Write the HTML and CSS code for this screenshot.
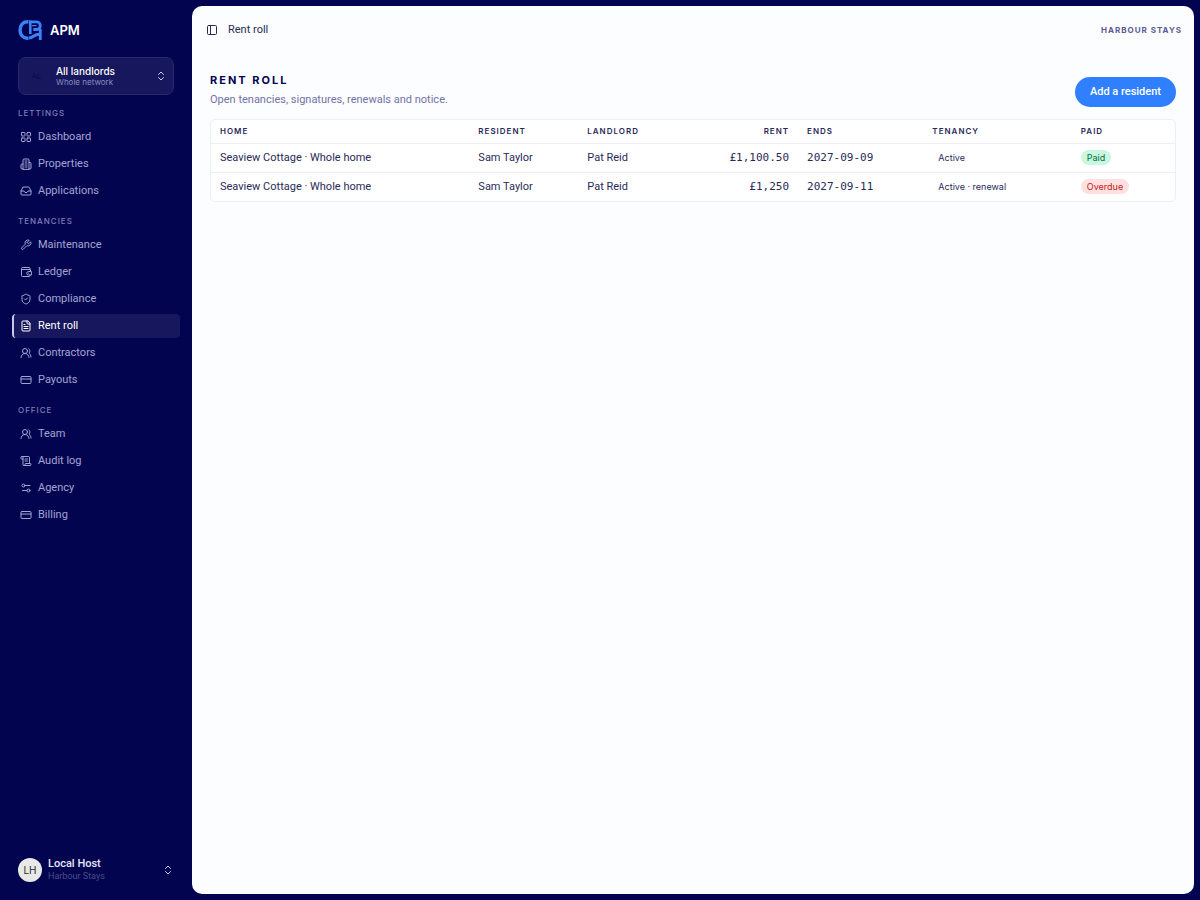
FILE: index.html
```html
<!DOCTYPE html>
<html lang="en">
<head>
  <meta charset="UTF-8">
  <title>Rent roll | APM</title>
  <meta name="viewport" content="width=device-width, initial-scale=1.0">
  <link rel="stylesheet" href="styles.css">
</head>
<body>
  <!-- SIDEBAR -->
  <aside class="sidebar">
    <a href="#" class="brand">
      <svg class="brand-mark" viewBox="0 0 24 20" fill="none" stroke="currentColor">
        <path d="M10.500 1.800H9C4.800 1.800 2 5.500 2 10s2.800 8.200 7 8.200h1.500" stroke-width="3.400"/>
        <path d="M12.300 14V0.500" stroke-width="2.600"/>
        <path d="M11 1.800h7.800c4.600 0 4.600 7.700 0 7.700h-3.500" stroke-width="2.800"/>
        <path d="M14 5.600h4.500" stroke-width="1.200"/>
        <path d="M22.300 9V20" stroke-width="2.800"/>
        <path d="M11 18c4.500 0 4.500-3.800 10.500-3.800" stroke-width="3"/>
      </svg>
      <span>APM</span>
    </a>

    <button class="switcher" type="button">
      <span class="switcher-badge">AL</span>
      <span class="stack">
        <span class="switcher-name">All landlords</span>
        <span class="switcher-note">Whole network</span>
      </span>
      <svg class="icon chevrons" viewBox="0 0 24 24"><path d="m7 15 5 5 5-5"/><path d="m7 9 5-5 5 5"/></svg>
    </button>

    <nav class="nav">
      <div class="nav-group">
        <h2>Lettings</h2>
        <a href="#"><svg class="icon" viewBox="0 0 24 24"><rect x="3" y="3" width="7" height="7" rx="1"/><rect x="14" y="3" width="7" height="7" rx="1"/><rect x="14" y="14" width="7" height="7" rx="1"/><rect x="3" y="14" width="7" height="7" rx="1"/></svg>Dashboard</a>
        <a href="#"><svg class="icon" viewBox="0 0 24 24"><path d="M6 22V4a2 2 0 0 1 2-2h8a2 2 0 0 1 2 2v18Z"/><path d="M6 12H4a2 2 0 0 0-2 2v6a2 2 0 0 0 2 2h2"/><path d="M18 9h2a2 2 0 0 1 2 2v9a2 2 0 0 1-2 2h-2"/><path d="M10 6h4M10 10h4M10 14h4M10 18h4"/></svg>Properties</a>
        <a href="#"><svg class="icon" viewBox="0 0 24 24"><path d="M22 12h-6l-2 3h-4l-2-3H2"/><path d="M5.450 5.110 2 12v6a2 2 0 0 0 2 2h16a2 2 0 0 0 2-2v-6l-3.450-6.890A2 2 0 0 0 16.760 4H7.240a2 2 0 0 0-1.790 1.110z"/></svg>Applications</a>
      </div>
      <div class="nav-group">
        <h2>Tenancies</h2>
        <a href="#"><svg class="icon" viewBox="0 0 24 24"><path d="M14.700 6.300a1 1 0 0 0 0 1.400l1.600 1.600a1 1 0 0 0 1.400 0l3.770-3.770a6 6 0 0 1-7.940 7.940l-6.910 6.910a2.120 2.120 0 0 1-3-3l6.910-6.910a6 6 0 0 1 7.940-7.940l-3.760 3.760z"/></svg>Maintenance</a>
        <a href="#"><svg class="icon" viewBox="0 0 24 24"><path d="M17 14h.01"/><path d="M20 7V5a2 2 0 0 0-2-2H5a2 2 0 0 0-2 2v14a2 2 0 0 0 2 2h13a2 2 0 0 0 2-2v-1"/><path d="M3 7h17a1 1 0 0 1 1 1v3"/><path d="M22 11h-5a3.500 3.500 0 0 0 0 7h5z"/></svg>Ledger</a>
        <a href="#"><svg class="icon" viewBox="0 0 24 24"><path d="M20 13c0 5-3.500 7.500-7.660 8.950a1 1 0 0 1-.67-.01C7.500 20.500 4 18 4 13V6a1 1 0 0 1 1-1c2 0 4.500-1.200 6.240-2.720a1.170 1.170 0 0 1 1.520 0C14.510 3.810 17 5 19 5a1 1 0 0 1 1 1z"/><path d="m9 12 2 2 4-4"/></svg>Compliance</a>
        <a href="#" class="active" aria-current="page"><svg class="icon" viewBox="0 0 24 24"><path d="M15 2H6a2 2 0 0 0-2 2v16a2 2 0 0 0 2 2h12a2 2 0 0 0 2-2V7Z"/><path d="M14 2v4a2 2 0 0 0 2 2h4"/><path d="M10 9H8M16 13H8M16 17H8"/></svg>Rent roll</a>
        <a href="#"><svg class="icon" viewBox="0 0 24 24"><path d="M18 21a8 8 0 0 0-16 0"/><circle cx="10" cy="8" r="5"/><path d="M22 20c0-3.370-2-6.500-4-8a5 5 0 0 0-.45-8.300"/></svg>Contractors</a>
        <a href="#"><svg class="icon" viewBox="0 0 24 24"><rect x="2" y="5" width="20" height="14" rx="2"/><path d="M2 10h20"/></svg>Payouts</a>
      </div>
      <div class="nav-group">
        <h2>Office</h2>
        <a href="#"><svg class="icon" viewBox="0 0 24 24"><path d="M18 21a8 8 0 0 0-16 0"/><circle cx="10" cy="8" r="5"/><path d="M22 20c0-3.370-2-6.500-4-8a5 5 0 0 0-.45-8.300"/></svg>Team</a>
        <a href="#"><svg class="icon" viewBox="0 0 24 24"><path d="M15 12h-5M15 8h-5"/><path d="M19 17V5a2 2 0 0 0-2-2H4"/><path d="M8 21h12a2 2 0 0 0 2-2v-1a1 1 0 0 0-1-1H11a1 1 0 0 0-1 1v1a2 2 0 1 1-4 0V5a2 2 0 1 0-4 0v2a1 1 0 0 0 1 1h3"/></svg>Audit log</a>
        <a href="#"><svg class="icon" viewBox="0 0 24 24"><path d="M20 7h-9M14 17H5"/><circle cx="17" cy="17" r="3"/><circle cx="7" cy="7" r="3"/></svg>Agency</a>
        <a href="#"><svg class="icon" viewBox="0 0 24 24"><rect x="2" y="5" width="20" height="14" rx="2"/><path d="M2 10h20"/></svg>Billing</a>
      </div>
    </nav>

    <button class="account" type="button">
      <span class="avatar">LH</span>
      <span class="stack">
        <span class="account-name">Local Host</span>
        <span class="account-note">Harbour Stays</span>
      </span>
      <svg class="icon chevrons" viewBox="0 0 24 24"><path d="m7 15 5 5 5-5"/><path d="m7 9 5-5 5 5"/></svg>
    </button>
  </aside>

  <!-- MAIN PANEL -->
  <main class="panel">
    <header class="topbar">
      <button class="toggle" type="button" aria-label="Toggle sidebar">
        <svg class="icon" viewBox="0 0 24 24"><rect x="3" y="3" width="18" height="18" rx="2"/><path d="M9 3v18"/></svg>
      </button>
      <span class="crumb">Rent roll</span>
      <span class="agency">Harbour Stays</span>
    </header>

    <section class="content">
      <div class="page-head">
        <div>
          <h1>Rent roll</h1>
          <p>Open tenancies, signatures, renewals and notice.</p>
        </div>
        <button class="add" type="button">Add a resident</button>
      </div>

      <div class="table-card">
        <table>
          <colgroup>
            <col class="col-home"><col class="col-resident"><col class="col-landlord"><col class="col-rent"><col class="col-ends"><col class="col-tenancy"><col>
          </colgroup>
          <thead>
            <tr>
              <th>Home</th>
              <th>Resident</th>
              <th>Landlord</th>
              <th class="amount">Rent</th>
              <th>Ends</th>
              <th>Tenancy</th>
              <th>Paid</th>
            </tr>
          </thead>
          <tbody>
            <tr>
              <td>Seaview Cottage · Whole home</td>
              <td>Sam Taylor</td>
              <td>Pat Reid</td>
              <td class="amount mono">£1,100.50</td>
              <td class="mono">2027-09-09</td>
              <td><span class="pill">Active</span></td>
              <td><span class="pill paid">Paid</span></td>
            </tr>
            <tr>
              <td>Seaview Cottage · Whole home</td>
              <td>Sam Taylor</td>
              <td>Pat Reid</td>
              <td class="amount mono">£1,250</td>
              <td class="mono">2027-09-11</td>
              <td><span class="pill">Active · renewal</span></td>
              <td><span class="pill overdue">Overdue</span></td>
            </tr>
          </tbody>
        </table>
      </div>
    </section>
  </main>
</body>
</html>
```
FILE: styles.css
```css
* {
  box-sizing: border-box;
}
body {
  margin: 0;
  min-height: 100vh;
  display: flex;
  background: #03044f;
  color: #2a2a58;
  font-family: Roboto, "Liberation Sans", sans-serif;
  font-size: 11px;
  line-height: 16px;
}
a {
  color: inherit;
  text-decoration: none;
}
button {
  font: inherit;
  color: inherit;
  border: none;
  background: none;
  padding: 0;
  cursor: pointer;
}
.icon {
  width: 12px;
  height: 12px;
  flex: none;
  fill: none;
  stroke: currentColor;
  stroke-width: 2;
  stroke-linecap: round;
  stroke-linejoin: round;
}
.brand,
.switcher,
.nav-group h2,
.avatar,
.agency,
h1,
th,
.pill {
  font-family: Inter, "Liberation Sans", sans-serif;
}

/* sidebar */
.sidebar {
  width: 192px;
  flex: none;
  display: flex;
  flex-direction: column;
  padding: 18px 12px;
}
.brand {
  display: flex;
  align-items: center;
  gap: 8px;
  height: 24px;
  margin: 0 6px 15px;
  color: #fff;
  font-size: 13px;
  font-weight: 600;
}
.brand-mark {
  width: 24px;
  height: 20px;
  color: #3b82f6;
}
.stack {
  display: flex;
  flex-direction: column;
  flex: 1;
  text-align: left;
}
.switcher {
  display: flex;
  align-items: center;
  gap: 8px;
  height: 38px;
  margin: 0 6px;
  padding: 0 6px;
  border: 1px solid #28296b;
  border-radius: 8px;
  background: #16175c;
}
.switcher-badge {
  width: 23px;
  color: #0b0b46;
  font-size: 8px;
  text-align: center;
}
.switcher-name {
  color: #fff;
  font-size: 10px;
  font-weight: 500;
  line-height: 12px;
}
.switcher-note {
  color: #8a8ac0;
  font-size: 8px;
  line-height: 10px;
}
.chevrons {
  color: #c9cae8;
}
.nav {
  flex: 1;
}
.nav-group {
  display: flex;
  flex-direction: column;
  gap: 3px;
  margin-top: 6px;
}
.nav-group h2 {
  margin: 0 6px -3px;
  color: #7e7fb8;
  font-size: 8px;
  font-weight: 500;
  line-height: 24px;
  letter-spacing: 1px;
  text-transform: uppercase;
}
.nav-group a {
  display: flex;
  align-items: center;
  gap: 6px;
  height: 24px;
  padding: 0 8px;
  border-radius: 4px;
  color: #a3a4d4;
}
.nav-group a.active {
  padding-left: 6px;
  border-left: 2px solid #c9cae8;
  background: #16175c;
  color: #fff;
}
.account {
  display: flex;
  align-items: center;
  gap: 6px;
  margin: 0 6px;
}
.avatar {
  width: 24px;
  height: 24px;
  border-radius: 50%;
  background: #e8e8e6;
  color: #2b2b2b;
  font-size: 10px;
  line-height: 24px;
}
.account-name {
  color: #e8e8fa;
  font-weight: 500;
  line-height: 12px;
}
.account-note {
  color: #4c4d8c;
  font-size: 9px;
  line-height: 12px;
}

/* main panel */
.panel {
  flex: 1;
  min-width: 0;
  margin: 6px 6px 6px 0;
  border-radius: 10px;
  background: #fbfdff;
}
.topbar {
  display: flex;
  align-items: center;
  height: 48px;
  padding: 0 12px 0 14px;
}
.toggle {
  display: flex;
  margin-right: 10px;
}
.agency {
  margin-left: auto;
  color: #5c5a94;
  font-size: 8px;
  font-weight: 700;
  letter-spacing: 1px;
  text-transform: uppercase;
}
.content {
  padding: 18px;
}
.page-head {
  display: flex;
  align-items: center;
  justify-content: space-between;
  margin-bottom: 11px;
}
h1 {
  margin: 0 0 4px;
  color: #03044f;
  font-size: 11px;
  font-weight: 700;
  line-height: 16px;
  letter-spacing: 2px;
  text-transform: uppercase;
}
.page-head p {
  margin: 0;
  color: #7472a4;
}
.add {
  height: 30px;
  margin-top: 4px;
  padding: 0 15px;
  border-radius: 15px;
  background: #2f7fff;
  color: #fff;
  font-weight: 500;
}
.table-card {
  border: 1px solid #eceff6;
  border-radius: 5px;
  background: #fff;
}
table {
  width: 100%;
  table-layout: fixed;
  border-collapse: collapse;
}
.col-home { width: 26.8%; }
.col-resident { width: 11.3%; }
.col-landlord { width: 12%; }
.col-rent { width: 10.8%; }
.col-ends { width: 13%; }
.col-tenancy { width: 15.4%; }
th,
td {
  padding: 0 9px;
  text-align: left;
  white-space: nowrap;
}
th {
  height: 23px;
  font-size: 8px;
  font-weight: 600;
  letter-spacing: 1px;
  text-transform: uppercase;
}
td {
  height: 29px;
  border-top: 1px solid #eceff6;
}
.amount {
  text-align: right;
}
.mono {
  font-family: "DejaVu Sans Mono", monospace;
}
.pill {
  display: block;
  width: fit-content;
  padding: 0 6px;
  border-radius: 8px;
  font-size: 9px;
  line-height: 15px;
}
.paid {
  background: #c9f7df;
  color: #08703f;
}
.overdue {
  background: #ffe0e0;
  color: #c01818;
}
```
